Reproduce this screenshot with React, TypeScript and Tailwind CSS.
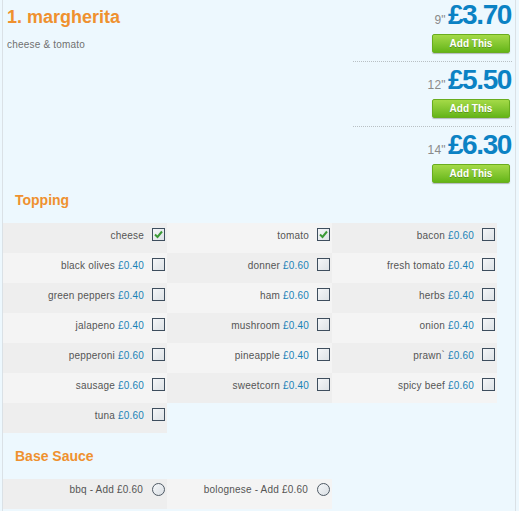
import React from "react";

const toppings: { name: string; price?: string; checked?: boolean }[] = [
  { name: "cheese", checked: true },
  { name: "tomato", checked: true },
  { name: "bacon", price: "£0.60" },
  { name: "black olives", price: "£0.40" },
  { name: "donner", price: "£0.60" },
  { name: "fresh tomato", price: "£0.40" },
  { name: "green peppers", price: "£0.40" },
  { name: "ham", price: "£0.60" },
  { name: "herbs", price: "£0.40" },
  { name: "jalapeno", price: "£0.40" },
  { name: "mushroom", price: "£0.40" },
  { name: "onion", price: "£0.40" },
  { name: "pepperoni", price: "£0.60" },
  { name: "pineapple", price: "£0.40" },
  { name: "prawn`", price: "£0.60" },
  { name: "sausage", price: "£0.60" },
  { name: "sweetcorn", price: "£0.40" },
  { name: "spicy beef", price: "£0.60" },
  { name: "tuna", price: "£0.60" },
];

const sizes = [
  { size: '9"', price: "£3.70" },
  { size: '12"', price: "£5.50" },
  { size: '14"', price: "£6.30" },
];

function Checkbox({ checked }: { checked?: boolean }) {
  return (
    <span className="mt-[5px] w-[13px] h-[13px] shrink-0 border border-[#3e4e5e] bg-gradient-to-br from-[#f4f6f8] to-[#dde2e6] flex items-center justify-center">
      {checked && (
        <svg width="11" height="11" viewBox="0 0 11 11">
          <path d="M2 5.5 L4.5 8 L9 2.5" fill="none" stroke="#3b9a36" strokeWidth="2" />
        </svg>
      )}
    </span>
  );
}

function Radio() {
  return (
    <span className="mt-[4px] w-[13px] h-[13px] shrink-0 rounded-full border border-[#4e5964] bg-gradient-to-br from-[#f6f8fa] to-[#d9dee3]" />
  );
}

function AddButton() {
  return (
    <button className="mt-[5px] w-[78px] h-[19px] rounded-[2px] border border-[#69ad1e] bg-gradient-to-b from-[#a4da47] to-[#64b516] text-white text-[10px] font-bold leading-none shadow-[0_1px_1px_rgba(0,0,0,0.25)] [text-shadow:0_1px_0_rgba(0,0,0,0.25)]">
      Add This
    </button>
  );
}

export default function App() {
  return (
    <div className="w-[519px] h-[511px] bg-[#edf8fe] font-['Liberation_Sans',Arial,sans-serif] overflow-hidden">
      <div className="ml-[2px] w-[514px] h-full border-l border-r border-[#dae1e6]">
        <div className="flex justify-between">
          <div className="pl-[4px] pt-[8px]">
            <h1 className="text-[18px] leading-[18px] font-bold text-[#ef912f]">1. margherita</h1>
            <p className="mt-[13px] text-[10px] leading-[12px] tracking-[0.2px] text-[#707070]">
              cheese &amp; tomato
            </p>
          </div>
          <div className="w-[159px] mr-[3px] pt-[1px]">
            {sizes.map((s, i) => (
              <div
                key={s.size}
                className={
                  i < sizes.length - 1
                    ? "flex flex-col items-end pr-[2px] pb-[8px] mb-[4px] border-b border-dotted border-[#b9c0c4]"
                    : "flex flex-col items-end pr-[2px]"
                }
              >
                <div className="flex items-baseline -mr-[1px]">
                  <span className="text-[12px] text-[#8a8a8a] tracking-[0.3px] mr-[2px]">{s.size}</span>
                  <span className="text-[28px] leading-[28px] font-bold tracking-[-1.4px] text-[#0b82c4]">
                    {s.price}
                  </span>
                </div>
                <AddButton />
              </div>
            ))}
          </div>
        </div>

        <h2 className="mt-[10px] pl-[12px] text-[14px] leading-[14px] font-bold text-[#ef912f]">Topping</h2>
        <div className="mt-[16px] grid grid-cols-[164px_165px_165px]">
          {toppings.map((t, i) => (
            <div
              key={t.name}
              className={
                (i % 2 === 0 ? "bg-[#eeeeee]" : "bg-[#f4f4f4]") +
                " h-[30px] flex items-start justify-end gap-[8px] pr-[2px]"
              }
            >
              <span className="mt-[7px] text-[10px] leading-[12px] tracking-[0.2px] text-[#555555]">
                {t.name}
                {t.price && <span className="text-[#1a82b6]"> {t.price}</span>}
              </span>
              <Checkbox checked={t.checked} />
            </div>
          ))}
        </div>

        <h2 className="mt-[16px] pl-[12px] text-[14px] leading-[14px] font-bold text-[#ef912f]">Base Sauce</h2>
        <div className="mt-[16px] grid grid-cols-[164px_165px_165px]">
          {["bbq - Add £0.60", "bolognese - Add £0.60"].map((s, i) => (
            <div
              key={s}
              className={
                (i % 2 === 0 ? "bg-[#eeeeee]" : "bg-[#f4f4f4]") +
                " h-[30px] flex items-start justify-end gap-[9px] pr-[2px]"
              }
            >
              <span className="mt-[5px] text-[10px] leading-[12px] tracking-[0.2px] text-[#555555]">{s}</span>
              <Radio />
            </div>
          ))}
        </div>
      </div>
    </div>
  );
}
